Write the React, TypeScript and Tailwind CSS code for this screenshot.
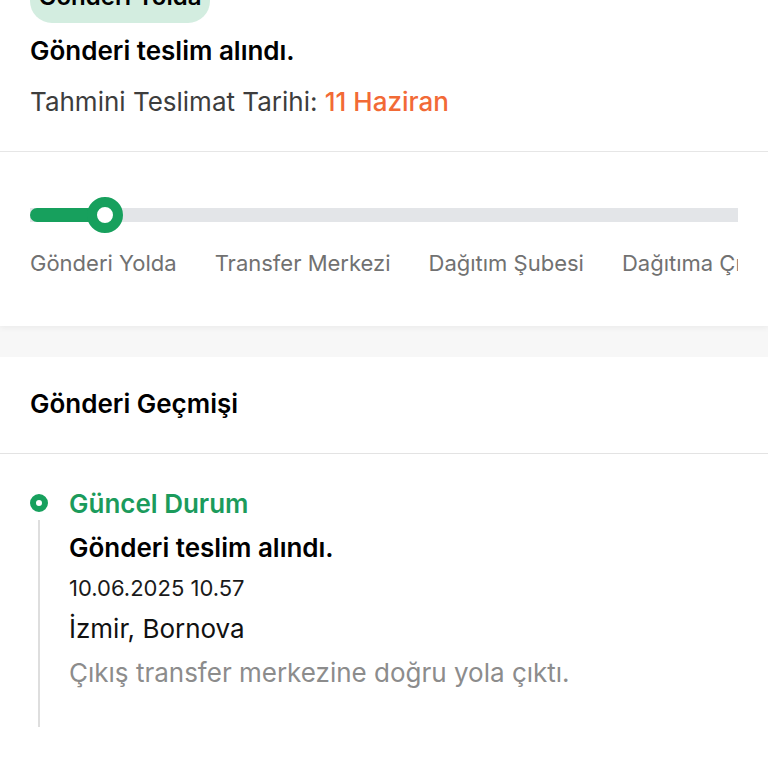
import React from 'react';

const steps = ['Gönderi Yolda', 'Transfer Merkezi', 'Dağıtım Şubesi', 'Dağıtıma Çıktı', 'Teslim Edildi'];

const App: React.FC = () => {
  return (
    <div className="flex h-[768px] flex-col overflow-hidden bg-[#f7f7f7] font-['Inter',sans-serif] text-black">
      {/* Summary card */}
      <div className="bg-white shadow-[0_2px_6px_rgba(0,0,0,0.05)]">
        <div className="px-[30px] pb-[33px]">
          <div className="-mt-[28px] w-[180px] rounded-[22px] bg-[#d3ede0] pt-[10px] pb-[11px] text-center text-[24px] font-semibold leading-[30px]">
            Gönderi Yolda
          </div>
          <div className="mt-[12px] text-[26px] font-semibold leading-[32px]">Gönderi teslim alındı.</div>
          <div className="mt-[19px] text-[26px] leading-[32px] text-[#3d3d3d]">
            Tahmini Teslimat Tarihi: <span className="font-medium text-[#f26a36]">11 Haziran</span>
          </div>
        </div>

        <div className="h-px bg-[#e6e6e6]" />

        <div className="px-[30px] pt-[56px] pb-[49px]">
          <div className="relative h-[14px] w-full bg-[#e3e5e8]">
            <div className="h-full w-[76px] rounded-l-full bg-[#17a05d]" />
            <div className="absolute left-[57px] top-[-11px] h-[36px] w-[36px] rounded-full border-[10px] border-[#17a05d] bg-white" />
          </div>
          <div className="mt-[27px] flex gap-[38px] overflow-hidden whitespace-nowrap text-[22px] leading-[28px] text-[#717171]">
            {steps.map((s) => (
              <span key={s} className="shrink-0">
                {s}
              </span>
            ))}
          </div>
        </div>
      </div>

      {/* History card */}
      <div className="mt-[31px] flex-1 bg-white">
        <div className="px-[30px] pt-[31px] pb-[33px] text-[26px] font-semibold leading-[32px]">Gönderi Geçmişi</div>
        <div className="h-px bg-[#e3e3e3]" />

        <div className="flex gap-[21px] px-[30px] pt-[34px]">
          <div className="flex w-[18px] flex-col items-center">
            <div className="mt-[6px] h-[18px] w-[18px] rounded-full border-[6px] border-[#17a05d] bg-white" />
            <div className="mt-[8px] w-[2px] flex-1 bg-[#dedede]" />
          </div>
          <div className="pb-[38px]">
            <div className="text-[26px] font-semibold leading-[32px] text-[#1b9b5c]">Güncel Durum</div>
            <div className="mt-[12px] text-[26px] font-semibold leading-[32px]">Gönderi teslim alındı.</div>
            <div className="mt-[10px] text-[22px] leading-[28px] text-[#1a1a1a]">10.06.2025 10.57</div>
            <div className="mt-[11px] text-[26px] leading-[32px] text-[#111]">İzmir, Bornova</div>
            <div className="mt-[12px] text-[26px] leading-[32px] text-[#8c8c8c]">Çıkış transfer merkezine doğru yola çıktı.</div>
          </div>
        </div>
      </div>
    </div>
  );
};

export default App;
